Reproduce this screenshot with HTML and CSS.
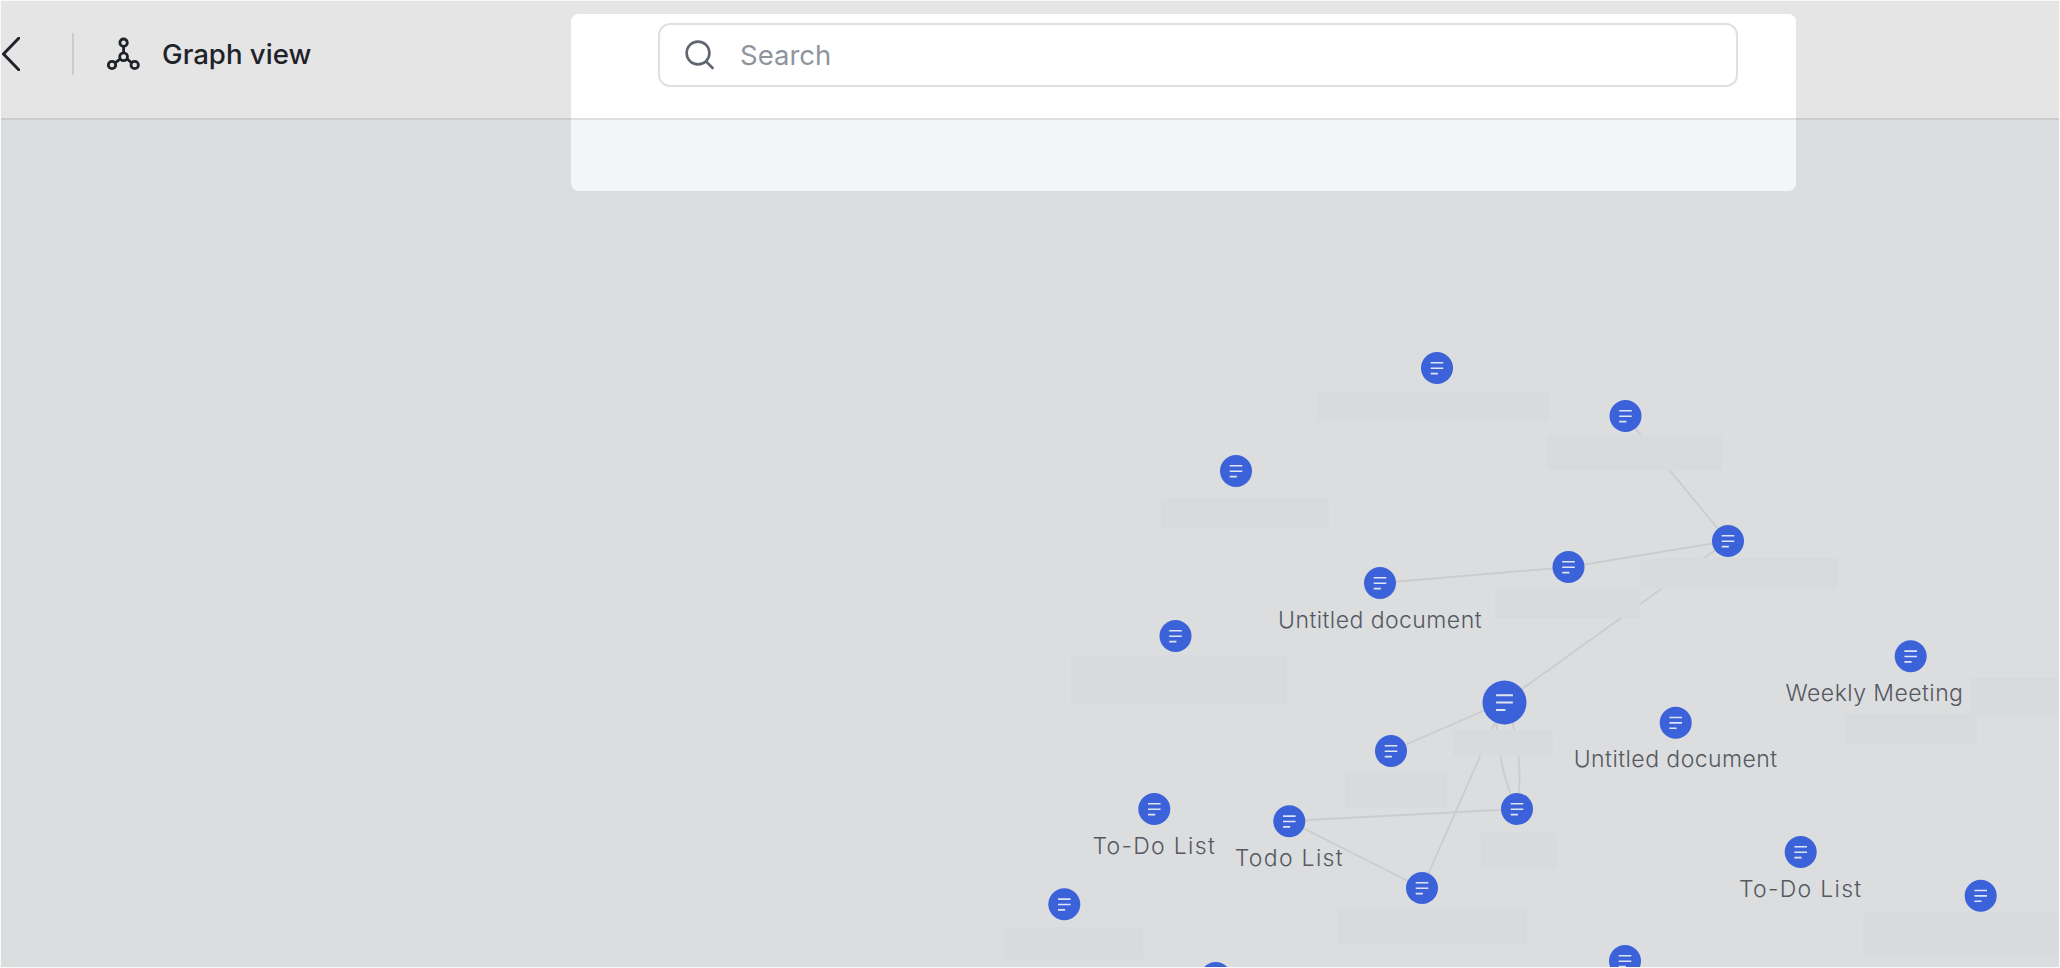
FILE: index.html
```html
<!DOCTYPE html>
<html lang="en">
<head>
<meta charset="utf-8">
<title>Graph view</title>
<link rel="stylesheet" href="styles.css">
</head>
<body>
<div class="app">
  <header class="topbar">
    <button class="back" aria-label="Back">
      <svg class="back-icon" viewBox="0 0 18 34"><path d="M17 1 1.5 17 17 33"/></svg>
    </button>
    <span class="divider"></span>
    <svg class="graph-icon" viewBox="0 0 34 34">
      <circle cx="16.6" cy="5.7" r="3.7"/>
      <circle cx="16.6" cy="19.7" r="3.9"/>
      <circle cx="5" cy="28" r="3.7"/>
      <circle cx="27.7" cy="28" r="3.7"/>
      <path d="M16.6 9.4v6.4M13.3 21.8l-5.2 4.1M19.9 21.8l4.7 4.1"/>
    </svg>
    <h1 class="title">Graph view</h1>
  </header>

  <main class="canvas">
    <svg class="graph" viewBox="1 120 2058 848">
      <defs>
        <g id="node">
          <circle class="disc" r="16"/>
          <path class="lines" d="M-6.3-5.2H6.3M-6.3 .2H6.3M-6.3 5.6H.9"/>
        </g>
        <g id="node-big">
          <circle class="disc" r="22"/>
          <path class="lines lines-big" d="M-8.4-7.2H8.4M-8.4 0H8.4M-8.4 7.6H.9"/>
        </g>
      </defs>

      <g class="edges">
        <path d="M1625 416 1728 541"/>
        <path d="M1380 583 1569 567 1728 541"/>
        <path d="M1728 541 1504 702"/>
        <path d="M1504 702 1391 751"/>
        <path d="M1504 702 1422 888"/>
        <path d="M1496 720Q1500 775 1517 809"/>
        <path d="M1512 720Q1524 770 1517 809"/>
        <path d="M1289 821 1517 809"/>
        <path d="M1289 821 1422 888"/>
      </g>

      <g class="masks">
        <rect x="1317" y="391" width="232" height="30"/>
        <rect x="1547" y="435" width="175" height="35"/>
        <rect x="1161" y="498" width="168" height="30"/>
        <rect x="1640" y="558" width="198" height="31"/>
        <rect x="1495" y="587" width="145" height="31"/>
        <rect x="1071" y="655" width="216" height="50"/>
        <rect x="1453" y="730" width="100" height="26"/>
        <rect x="1345" y="772" width="102" height="36"/>
        <rect x="1481" y="833" width="76" height="36"/>
        <rect x="1338" y="909" width="189" height="35"/>
        <rect x="1004" y="927" width="139" height="32"/>
        <rect x="1971" y="678" width="88" height="39"/>
        <rect x="1845" y="714" width="132" height="30"/>
        <rect x="1863" y="913" width="196" height="42"/>
      </g>

      <use href="#node" x="1437" y="368"/>
      <use href="#node" x="1625.5" y="416"/>
      <use href="#node" x="1236" y="471"/>
      <use href="#node" x="1728" y="541"/>
      <use href="#node" x="1568.5" y="567"/>
      <use href="#node" x="1380" y="583"/>
      <use href="#node" x="1175.5" y="636"/>
      <use href="#node-big" x="1504.5" y="702.5"/>
      <use href="#node" x="1675.7" y="722.7"/>
      <use href="#node" x="1391" y="751"/>
      <use href="#node" x="1517" y="809"/>
      <use href="#node" x="1422" y="888"/>
      <use href="#node" x="1625" y="961"/>
      <use href="#node" x="1154.3" y="809"/>
      <use href="#node" x="1289.3" y="821.3"/>
      <use href="#node" x="1064.3" y="904.3"/>
      <use href="#node" x="1215.7" y="978"/>
      <use href="#node" x="1910.7" y="656.3"/>
      <use href="#node" x="1800.7" y="852"/>
      <use href="#node" x="1980.7" y="895.7"/>

      <g class="labels">
        <text x="1380" y="628">Untitled document</text>
        <text x="1675.7" y="767">Untitled document</text>
        <text x="1874.5" y="701">Weekly Meeting</text>
        <text class="spaced" x="1154.3" y="854">To-Do List</text>
        <text class="spaced" x="1289.3" y="866">Todo List</text>
        <text class="spaced" x="1800.7" y="897">To-Do List</text>
      </g>
    </svg>
  </main>

  <section class="panel">
    <div class="panel-head">
      <div class="search">
        <svg class="search-icon" viewBox="0 0 30 30">
          <circle cx="13" cy="13" r="11.4"/>
          <path d="M21 21.4 27.6 28"/>
        </svg>
        <span class="placeholder">Search</span>
      </div>
    </div>
    <div class="panel-body"></div>
  </section>
</div>
</body>
</html>
```
FILE: styles.css
```css
* { box-sizing: border-box; }

html, body {
  margin: 0;
  height: 100%;
  background: #fafafa;
  overflow: hidden;
}

body {
  padding: 1px 1px 1px 1px;
  font-family: Inter, "Noto Sans", sans-serif;
}

.app {
  position: relative;
  display: flex;
  flex-direction: column;
  width: 2058px;
  height: 966px;
  overflow: hidden;
  background: #dcdddf;
}

.topbar {
  display: flex;
  align-items: center;
  flex: none;
  height: 119px;
  padding-bottom: 12px;
  background: #e5e5e5;
  border-bottom: 2px solid #cacbcd;
}

.back {
  display: flex;
  width: 20px;
  height: 34px;
  margin-left: 1px;
  padding: 0;
  border: 0;
  background: none;
}

.back-icon {
  width: 18px;
  height: 34px;
  fill: none;
  stroke: #1f2329;
  stroke-width: 3;
  stroke-linecap: round;
  stroke-linejoin: round;
}

.divider {
  width: 2px;
  height: 42px;
  margin-left: 50px;
  background: #cacbcd;
}

.graph-icon {
  width: 34px;
  height: 34px;
  margin-left: 33px;
  fill: none;
  stroke: #1f2329;
  stroke-width: 2.8;
}

.title {
  margin: 0 0 0 21px;
  font-size: 27.6px;
  font-weight: 450;
  line-height: 34px;
  color: #1f2329;
}

.canvas {
  flex: 1;
  min-height: 0;
}

.graph {
  display: block;
  width: 2058px;
  height: 848px;
}

.edges path {
  fill: none;
  stroke: #cbcccd;
  stroke-width: 1.8;
}

.masks rect {
  fill: #d9dadd;
}

.disc {
  fill: #3b62d8;
}

.lines {
  fill: none;
  stroke: #e0e5f6;
  stroke-width: 1.6;
}

.lines-big {
  stroke-width: 2;
}

.labels text {
  font-family: Inter, "Noto Sans", sans-serif;
  font-size: 23px;
  font-weight: 300;
  letter-spacing: 0.45px;
  text-anchor: middle;
  fill: #55595f;
}

.labels .spaced {
  letter-spacing: 1.3px;
}

.panel {
  position: absolute;
  top: 13px;
  left: 570px;
  display: flex;
  flex-direction: column;
  width: 1225px;
  height: 177px;
  overflow: hidden;
  border-radius: 8px;
  background: #f4f5f7;
}

.panel-head {
  flex: none;
  height: 106px;
  padding: 9px 0 0 87px;
  background: #fff;
  border-bottom: 2px solid #dee0e3;
}

.search {
  display: flex;
  align-items: center;
  width: 1080px;
  height: 64px;
  padding-left: 25px;
  border: 2px solid #dee0e3;
  border-radius: 12px;
  background: #fff;
}

.search-icon {
  flex: none;
  width: 30px;
  height: 30px;
  margin-top: -1px;
  fill: none;
  stroke: #5f6670;
  stroke-width: 2.6;
  stroke-linecap: round;
}

.placeholder {
  margin-left: 25px;
  font-size: 27.5px;
  line-height: 34px;
  color: #8f959e;
}

.panel-body {
  flex: 1;
}
```
